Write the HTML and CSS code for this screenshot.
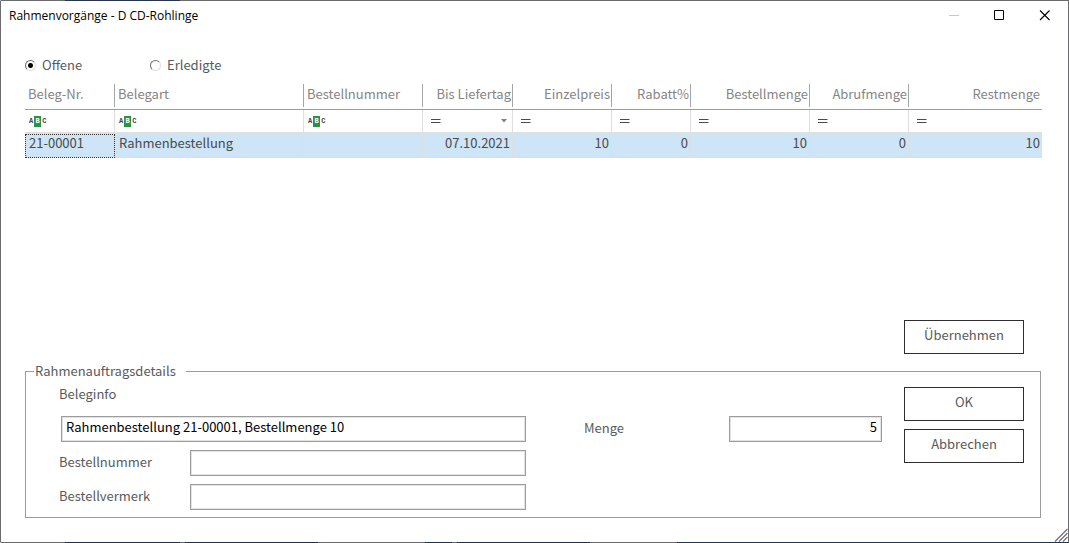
FILE: index.html
```html
<!DOCTYPE html>
<html lang="de">
<head>
<meta charset="utf-8">
<title>Rahmenvorgänge - D CD-Rohlinge</title>
<link rel="stylesheet" href="styles.css">
</head>
<body>
<svg class="defs" width="0" height="0" aria-hidden="true">
  <symbol id="equals" viewBox="0 0 10 5"><path d="M0 .5h9.500M0 3.500h9.500" stroke="#4a4a4a" stroke-width="1.200"/></symbol>
</svg>
<div class="window">
  <header class="titlebar">
    <h1 class="title">Rahmenvorgänge - D CD-Rohlinge</h1>
    <div class="controls">
      <button type="button" class="control" aria-label="Minimieren" disabled><svg width="11" height="11" viewBox="0 0 11 11"><path d="M0 5.500h10" stroke="#c8c8c8"/></svg></button>
      <button type="button" class="control" aria-label="Maximieren"><svg width="11" height="11" viewBox="0 0 11 11"><path d="M.5 .5h9v9h-9z" fill="none" stroke="#000"/></svg></button>
      <button type="button" class="control" aria-label="Schließen"><svg width="11" height="11" viewBox="0 0 11 11"><path d="M1 .5l9.500 9.500M10.500 .5L1 10" stroke="#000" stroke-width="1.100"/></svg></button>
    </div>
  </header>
  <main class="content">
    <div class="modes">
      <label class="mode"><input type="radio" name="status" class="radio" checked>Offene</label>
      <label class="mode"><input type="radio" name="status" class="radio">Erledigte</label>
    </div>
    <table class="grid">
      <colgroup><col class="c90"><col class="c189"><col class="c119"><col class="c90"><col class="c99"><col class="c79"><col class="c119"><col class="c99"><col></colgroup>
      <thead>
        <tr class="heads">
          <th><span>Beleg-Nr.</span></th><th><span>Belegart</span></th><th><span>Bestellnummer</span></th>
          <th class="num"><span>Bis Liefertag</span></th><th class="num"><span>Einzelpreis</span></th><th class="num"><span>Rabatt%</span></th>
          <th class="num"><span>Bestellmenge</span></th><th class="num"><span>Abrufmenge</span></th><th class="num"><span>Restmenge</span></th>
        </tr>
        <tr class="filters">
          <td><button type="button" class="filter">A<b>B</b>C</button></td>
          <td><button type="button" class="filter">A<b>B</b>C</button></td>
          <td><button type="button" class="filter">A<b>B</b>C</button></td>
          <td><button type="button" class="filter equal" aria-label="Gleich"><svg width="10" height="5"><use href="#equals"/></svg><svg class="caret" width="6" height="4" viewBox="0 0 6 4"><path d="M0 0h6L3 3.500z" fill="#808080"/></svg></button></td>
          <td><button type="button" class="filter equal" aria-label="Gleich"><svg width="10" height="5"><use href="#equals"/></svg></button></td>
          <td><button type="button" class="filter equal" aria-label="Gleich"><svg width="10" height="5"><use href="#equals"/></svg></button></td>
          <td><button type="button" class="filter equal" aria-label="Gleich"><svg width="10" height="5"><use href="#equals"/></svg></button></td>
          <td><button type="button" class="filter equal" aria-label="Gleich"><svg width="10" height="5"><use href="#equals"/></svg></button></td>
          <td><button type="button" class="filter equal" aria-label="Gleich"><svg width="10" height="5"><use href="#equals"/></svg></button></td>
        </tr>
      </thead>
      <tbody>
        <tr class="selected">
          <td class="current">21-00001</td><td>Rahmenbestellung</td><td></td><td class="num">07.10.2021</td><td class="num">10</td><td class="num">0</td><td class="num">10</td><td class="num">0</td><td class="num">10</td>
        </tr>
      </tbody>
    </table>
    <div class="apply"><button type="button" class="button">Übernehmen</button></div>
    <fieldset class="details">
      <legend>Rahmenauftragsdetails</legend>
      <div class="columns">
        <div class="fields">
          <label for="info">Beleginfo</label>
          <input id="info" class="box info" type="text" value="Rahmenbestellung 21-00001, Bestellmenge 10">
          <div class="row"><label for="number">Bestellnummer</label><input id="number" class="box" type="text"></div>
          <div class="row"><label for="note">Bestellvermerk</label><input id="note" class="box" type="text"></div>
        </div>
        <div class="amount"><label for="amount">Menge</label><input id="amount" class="box" type="text" value="5"></div>
        <div class="actions">
          <button type="button" class="button">OK</button>
          <button type="button" class="button">Abbrechen</button>
        </div>
      </div>
    </fieldset>
  </main>
  <svg class="grip" width="14" height="14" viewBox="0 0 14 14" aria-hidden="true"><path d="M1 13.500L13.500 1M5 13.500L13.500 5M9 13.500L13.500 9" stroke="#707070" stroke-width="1.200"/></svg>
</div>
</body>
</html>
```

FILE: styles.css
```css
* { box-sizing: border-box; }

body {
  margin: 0;
  background: #fff;
  color: #5a5a5a;
  font: 13px/20px "Noto Sans CJK SC", "Noto Sans", sans-serif;
}

button, input { font: inherit; color: inherit; }

svg { display: block; }

.defs { position: absolute; }

.window {
  position: relative;
  display: flex;
  flex-direction: column;
  min-height: 100vh;
  border: 1px solid #6b6b6d;
  border-top-color: transparent;
  border-bottom-color: transparent;
  background:
    linear-gradient(90deg, #6b6b6d 65px, #26344d 65px 180px, #6b6b6d 180px) top / 100% 1px no-repeat border-box,
    linear-gradient(90deg, #6b6b6d 65px, #26304a 65px 180px, #6b6b6d 180px 185px, #26304a 185px 318px, #6b6b6d 318px 425px, #26304a 425px 452px, #6b6b6d 452px 457px, #26304a 457px 590px, #6b6b6d 590px 677px, #26344d 677px) bottom / 100% 1px no-repeat border-box,
    #fff;
}

.titlebar {
  display: flex;
  justify-content: space-between;
  height: 30px;
  padding: 0 1px 0 8px;
}

.title {
  margin: 0;
  color: #000;
  font: 12px/29px "Open Sans", "Noto Sans", sans-serif;
}

.controls { display: flex; }

.control {
  display: grid;
  place-items: center;
  width: 45px;
  height: 28px;
  padding: 0;
  border: 0;
  background: none;
}

.content {
  flex: 1;
  display: flex;
  flex-direction: column;
  padding: 24px 26px 24px 24px;
}

.modes { display: flex; gap: 8px; }

.mode {
  display: flex;
  align-items: center;
  gap: 6px;
  width: 117px;
}

.radio {
  appearance: none;
  width: 11px;
  height: 11px;
  margin: 0;
  border: 1px solid #6e6e6e;
  border-right-color: #dedede;
  border-bottom-color: #dedede;
  border-radius: 50%;
}

.radio:checked { background: radial-gradient(circle, #000 2px, #fff 3px); }

.grid {
  width: 100%;
  margin-top: 8px;
  border-collapse: separate;
  border-spacing: 0;
  table-layout: fixed;
}

.c79 { width: 79px; }
.c90 { width: 90px; }
.c99 { width: 99px; }
.c119 { width: 119px; }
.c189 { width: 189px; }

.grid th, .grid td { padding: 0; text-align: left; font-weight: 400; }

.heads th { height: 27px; border-bottom: 1px solid #9c9c9c; vertical-align: top; color: #858585; }

.heads span {
  display: block;
  height: 23px;
  margin-top: 1px;
  padding: 0 1px 0 3px;
  border-right: 1px solid #a5a5a5;
}

.heads th:last-child span { border-right-color: transparent; }

.grid .num { text-align: right; }

.filters td { height: 24px; border-bottom: 2px solid #e0e0e0; border-right: 1px solid #e0e0e0; }
.filters td:last-child { border-right: 0; }

.filter {
  display: flex;
  align-items: center;
  gap: 1px;
  width: 100%;
  height: 22px;
  padding: 0 4px;
  border: 0;
  background: none;
  color: #444;
  font: bold 7px/11px "Liberation Mono", monospace;
}

.filter b { width: 7px; background: #2e9148; color: #fff; text-align: center; }

.equal { justify-content: space-between; padding: 0 5px 0 8px; }

.grid .selected td {
  height: 24px;
  padding: 0 2px 0 4px;
  border-right: 1px solid #dcdfe2;
  border-bottom: 1px solid #dcdfe2;
  background: #cde5f7;
  color: #4a4a4a;
  line-height: 18px;
  vertical-align: top;
}

.grid .selected td:last-child { border-right: 0; }

.selected .current { outline: 1px dotted #333; outline-offset: -1px; }

.apply {
  display: flex;
  justify-content: flex-end;
  margin-top: auto;
  padding: 0 18px 7px 0;
}

.button {
  width: 120px;
  height: 34px;
  padding: 0 0 4px;
  border: 1px solid #2e2e2e;
  background: #fff;
}

.details {
  min-width: 0;
  margin: 0 1px 0 0;
  padding: 0 16px 7px 33px;
  border: 1px solid #9c9c9c;
}

.details legend { margin-left: -25px; padding: 0 10px 0 1px; }

.columns { display: flex; align-items: flex-start; }

.fields {
  flex: 1;
  display: flex;
  flex-direction: column;
  gap: 8px;
  padding-top: 3px;
}

.row { display: flex; }
.row label { flex: 0 0 131px; padding-top: 2px; }

.box {
  flex: 1;
  min-width: 0;
  height: 26px;
  padding: 0 4px 6px;
  border: 1px solid #9c9c9c;
  border-radius: 0;
  box-shadow: inset 0 0 0 1px #e3e3e3;
  background: #fff;
  color: #000;
}

.info { flex: none; margin: 4px 0 0 2px; }

.amount {
  display: flex;
  align-items: center;
  width: 298px;
  margin: 35px 22px 0 58px;
}

.amount label { flex: 0 0 145px; padding-bottom: 2px; }
.amount .box { text-align: right; }

.actions {
  display: flex;
  flex-direction: column;
  gap: 8px;
  padding-top: 6px;
}

.grip { position: absolute; right: 0; bottom: 0; }
```
